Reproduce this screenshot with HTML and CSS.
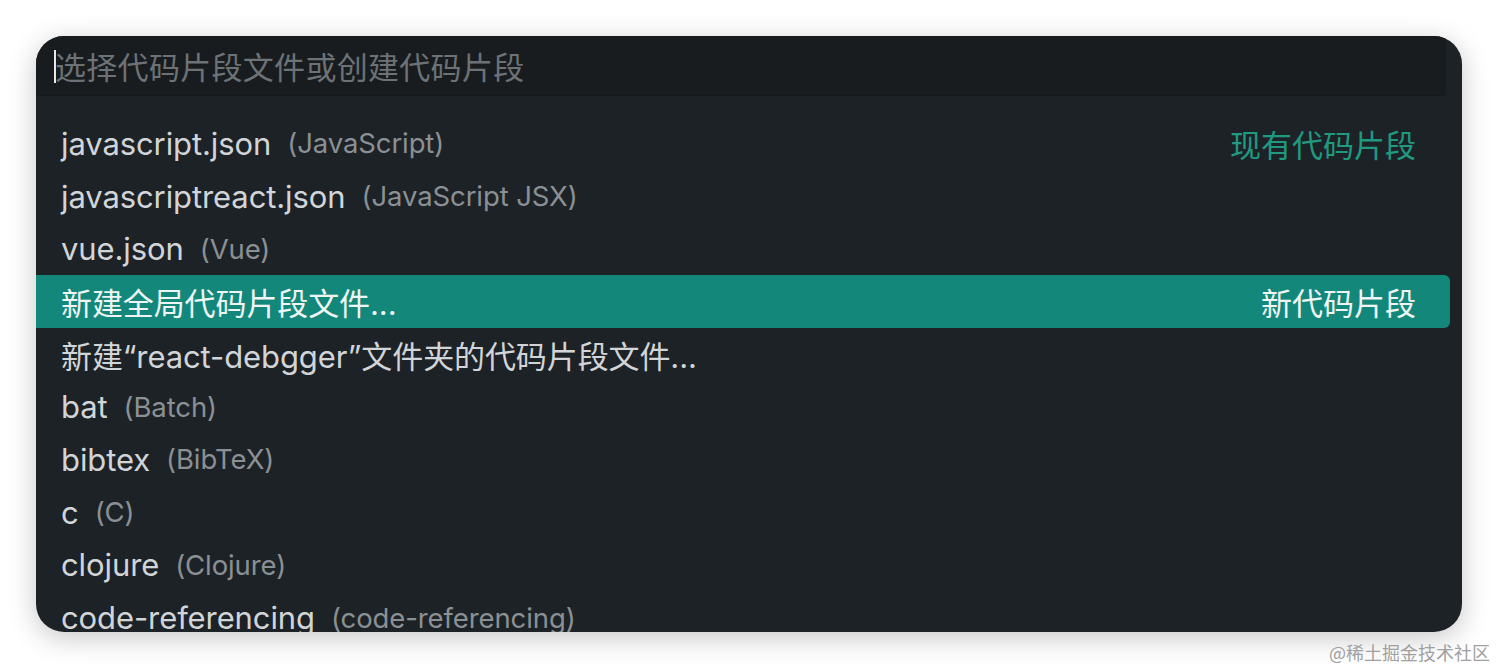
FILE: index.html
```html
<!DOCTYPE html>
<html lang="zh">
<head>
  <meta charset="UTF-8">
  <title>选择代码片段</title>
  <link rel="stylesheet" href="styles.css">
</head>
<body>
  <div id="picker">
    <div id="input-box">
      <span class="caret"></span><span class="placeholder">选择代码片段文件或创建代码片段</span>
    </div>
    <div id="list">
      <div class="scroll-thumb"></div>
      <div class="row">
        <span class="label">javascript.json</span><span class="desc">(JavaScript)</span>
        <span class="group">现有代码片段</span>
      </div>
      <div class="row">
        <span class="label">javascriptreact.json</span><span class="desc">(JavaScript JSX)</span>
      </div>
      <div class="row">
        <span class="label">vue.json</span><span class="desc">(Vue)</span>
      </div>
      <div class="row selected">
        <span class="label">新建全局代码片段文件...</span>
        <span class="group">新代码片段</span>
      </div>
      <div class="row">
        <span class="label">新建“react-debgger”文件夹的代码片段文件...</span>
      </div>
      <div class="row">
        <span class="label">bat</span><span class="desc">(Batch)</span>
      </div>
      <div class="row">
        <span class="label">bibtex</span><span class="desc">(BibTeX)</span>
      </div>
      <div class="row">
        <span class="label">c</span><span class="desc">(C)</span>
      </div>
      <div class="row">
        <span class="label">clojure</span><span class="desc">(Clojure)</span>
      </div>
      <div class="row">
        <span class="label">code-referencing</span><span class="desc">(code-referencing)</span>
      </div>
    </div>
  </div>
  <div id="watermark">@稀土掘金技术社区</div>
</body>
</html>
```

FILE: styles.css
```css
body {
    margin: 0;
    background: #ffffff;
    font-family: 'Inter', 'Noto Sans CJK SC', sans-serif;
    height: 668px;
    overflow: hidden;
}
#picker {
    margin: 36px 0 0 36px;
    width: 1426px;
    height: 596px;
    background: #1d2227;
    border-radius: 28px;
    overflow: hidden;
    box-shadow: 0 6px 28px rgba(0, 0, 0, 0.22);
    position: relative;
}
#input-box {
    width: 1392px;
    height: 59px;
    background: #181c1f;
    border-radius: 0 0 4px 4px;
    border-bottom: 1px solid #15191c;
    padding-left: 18px;
    display: flex;
    align-items: center;
}
.caret {
    width: 2px;
    height: 33px;
    background: #e8e8e8;
    margin-top: 2px;
}
.placeholder {
    font-family: 'Noto Sans CJK SC', sans-serif;
    font-size: 31px;
    color: #6c7276;
    letter-spacing: 0.3px;
    margin-left: -1px;
}
#list {
    width: 1414px;
    padding-top: 21px;
    position: relative;
}
.scroll-thumb {
    position: absolute;
    right: -48px;
    top: 22px;
    width: 22px;
    height: 64px;
    background: rgba(255, 255, 255, 0.025);
}
.row {
    height: 52.7px;
    display: flex;
    align-items: center;
    padding: 0 34px 0 25px;
    color: #d2d5d7;
    font-size: 31px;
    border-radius: 0 6px 6px 0;
    white-space: nowrap;
}
.label {
    letter-spacing: -0.1px;
}
.desc {
    color: #8b9094;
    font-size: 27.5px;
    margin-left: 16px;
    letter-spacing: -0.1px;
}
.group {
    margin-left: auto;
    color: #1f9a81;
    font-family: 'Noto Sans CJK SC', sans-serif;
    font-size: 31px;
}
.selected {
    background: #13877a;
    color: #eef5f3;
}
.selected .group {
    color: #eef5f3;
}
#watermark {
    position: absolute;
    right: 8px;
    top: 639px;
    font-family: 'Noto Sans CJK SC', sans-serif;
    font-size: 18px;
    color: #a0a0a0;
}
```
